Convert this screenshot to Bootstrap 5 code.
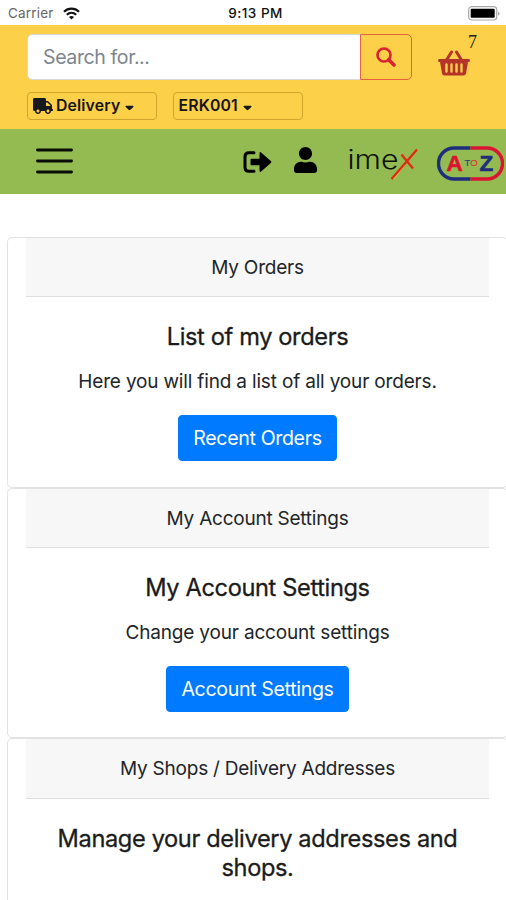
<!DOCTYPE html>
<html lang="en">
<head>
<meta charset="utf-8">
<meta name="viewport" content="width=device-width, initial-scale=1">
<title>My Account</title>
<link href="https://cdn.jsdelivr.net/npm/bootstrap@5.3.0/dist/css/bootstrap.min.css" rel="stylesheet">
<style>
html{font-size:19.556px}
body{font-family:Inter,"Liberation Sans",sans-serif;color:#212529;background:#fff;height:900px;overflow:hidden}
svg{display:block;flex:none}
.status-bar{height:25px;font-size:13.5px;padding:1px 6px 0 8px;display:grid;grid-template-columns:1fr auto 1fr}
.status-bar .carrier{color:#666;letter-spacing:.2px}
.status-bar .clock{font-weight:500;letter-spacing:.5px;color:#111;padding-left:3px}
.search-area{background:#fdd04a;height:104px;padding:9px 0 0 27px}
.search-box{width:385px;height:46px}
.search-box .form-control{border:1px solid #d8d8d8;border-radius:5px 0 0 5px;padding:2px 15px 0;letter-spacing:-.4px}
.search-box .form-control::placeholder{color:#7d858c}
.search-box .btn{width:52px;border:1px solid #e8603c;border-radius:0 5px 5px 0;padding:0}
.basket{width:44px;margin-left:26px}
.basket-count{font:18px/16px "Liberation Serif",serif;color:#222;padding-right:5px}
.picker-row{margin-top:12px;gap:16px}
.picker{width:130px;height:28px;border:1px solid #d0a52e;border-radius:4px;padding:0 4.5px;font-size:15.8px;font-weight:600;color:#151515;letter-spacing:.15px}
.picker svg:first-child{margin-right:3.5px}
.green-bar{background:#94bb52;height:65px;padding:0 2px 0 36px}
.green-bar .menu-icon{margin-bottom:2px}
.green-bar .exit-icon{margin-right:22px}
.green-bar .user-icon{margin-right:26px;margin-bottom:4px}
.green-bar .imex-logo{margin-right:16px}
.green-bar .atoz-logo{margin-top:3px}
.account-list{margin:43px -2px 0 7px;height:664px;overflow:hidden}
.account-list .card{border:1.4px solid #e2e2e2;border-radius:5px;padding:0 18px;height:250.7px}
.account-list .card-header{background:#f7f7f7;border-bottom:1.4px solid #dfdfdf;border-radius:0;padding:16px 1rem 0;height:59.3px;font-size:19px;letter-spacing:-.23px}
.account-list .card-body{padding:25px 1.25rem 0}
.account-list .card-title{font-size:23.6px;line-height:29.3px;letter-spacing:-.36px;font-weight:400;-webkit-text-stroke:.3px #1b1b1b;margin:0 -10px 15.5px;color:#1b1b1b}
.account-list .card-text{font-size:19px;line-height:29.3px;letter-spacing:-.17px;margin-bottom:18.500px}
.account-list .btn{--bs-btn-bg:#007bff;--bs-btn-border-color:#007bff;border-radius:4px;line-height:1.5;padding:8.5px 14.5px 6.5px;letter-spacing:-.33px}
.account-list .card-text,.account-list .card-header{white-space:nowrap}
</style>
</head>
<body>
<div class="status-bar align-items-center">
  <div class="d-flex align-items-center gap-2">
    <span class="carrier">Carrier</span>
    <svg width="17" height="13" viewBox="0 0 17 13" fill="none" stroke="#111" stroke-width="2.2"><path d="M1 4.7C5.2.6 11.8.6 16 4.7M3.8 7.8c2.700-2.500 6.700-2.500 9.400 0"/><path d="M8.500 12.500 6 9.900c1.500-1.200 3.500-1.200 5 0z" fill="#111" stroke="none"/></svg>
  </div>
  <span class="clock">9:13 PM</span>
  <svg class="ms-auto" width="32" height="15" viewBox="0 0 32 15"><rect x=".7" y=".7" width="28" height="13.300" rx="3" fill="#fff" stroke="#aaa" stroke-width="1.200"/><rect x="2.700" y="2.800" width="24" height="9" rx="1"/><path d="M30 5.500c2 .5 2 3.500 0 4z" fill="#aaa"/></svg>
</div>

<header class="search-area">
  <div class="d-flex">
    <div class="input-group search-box flex-nowrap">
      <input class="form-control" type="text" placeholder="Search for..." aria-label="Search">
      <button class="btn d-flex align-items-center justify-content-center" type="button" aria-label="Search">
        <svg width="20" height="20" viewBox="0 0 20 20" fill="none" stroke="#d82432"><circle cx="8" cy="8" r="6.500" stroke-width="2.700"/><path d="m12.700 12.700 5.300 5.300" stroke-width="3.600" stroke-linecap="round"/></svg>
      </button>
    </div>
    <div class="basket d-flex flex-column">
      <span class="basket-count text-end">7</span>
      <svg width="32" height="26" viewBox="0 0 32 26"><path d="m8.500 10 5-8M23.500 10l-5-8" stroke="#b5342a" stroke-width="3" stroke-linecap="round"/><path fill="#b5342a" fill-rule="evenodd" d="M1.500 9h29q1.500 0 1.500 1.500T30.500 12H30l-2 11.500q-.4 2-2.500 2h-19q-2.100 0-2.500-2L2 12h-.5Q0 12 0 10.500T1.500 9zM7.300 14.500v7a1.200 1.200 0 0 0 2.400 0v-7a1.200 1.200 0 0 0-2.400 0zm5 0v7a1.200 1.200 0 0 0 2.400 0v-7a1.200 1.200 0 0 0-2.400 0zm5 0v7a1.200 1.200 0 0 0 2.400 0v-7a1.200 1.200 0 0 0-2.400 0zm5 0v7a1.200 1.200 0 0 0 2.400 0v-7a1.200 1.200 0 0 0-2.400 0z"/></svg>
    </div>
  </div>
  <div class="d-flex picker-row">
    <div class="picker d-flex align-items-center">
      <svg width="20" height="16" viewBox="0 0 640 512" fill="#15181c"><path d="M624 352h-16V243.900c0-12.700-5.100-24.900-14.100-33.900L494 110.100c-9-9-21.200-14.100-33.900-14.100H416V48c0-26.500-21.500-48-48-48H48C21.500 0 0 21.500 0 48v320c0 26.500 21.500 48 48 48h16c0 53 43 96 96 96s96-43 96-96h128c0 53 43 96 96 96s96-43 96-96h48c8.800 0 16-7.200 16-16v-32c0-8.800-7.200-16-16-16zM160 464c-26.500 0-48-21.500-48-48s21.500-48 48-48 48 21.500 48 48-21.500 48-48 48zm320 0c-26.500 0-48-21.500-48-48s21.500-48 48-48 48 21.500 48 48-21.500 48-48 48zm80-208H416V144h44.100l99.900 99.900V256z"/></svg>
      <span>Delivery</span>
      <svg class="ms-1 mt-1" width="9" height="6" viewBox="0 0 10 6" fill="#15181c"><path d="M1.200.5h7.600q1.200.4.400 1.500L6 5q-1 .9-2 0L.8 2Q0 .9 1.200.5z"/></svg>
    </div>
    <div class="picker d-flex align-items-center">
      <span>ERK001</span>
      <svg class="ms-1 mt-1" width="9" height="6" viewBox="0 0 10 6" fill="#15181c"><path d="M1.200.5h7.600q1.200.4.400 1.500L6 5q-1 .9-2 0L.8 2Q0 .9 1.200.5z"/></svg>
    </div>
  </div>
</header>

<nav class="green-bar d-flex align-items-center">
  <svg class="menu-icon me-auto" width="37" height="26" viewBox="0 0 37 26" stroke="#0a0d06" stroke-width="2.900" stroke-linecap="round"><path d="M1.500 2h34M1.500 13h34M1.500 24h34"/></svg>
  <svg class="exit-icon" width="29" height="24" viewBox="0 0 29 24"><path d="M11 2.700H6Q2 2.700 2 6.700v10.600q0 4 4 4h5" fill="none" stroke="#000" stroke-width="3" stroke-linecap="round"/><path d="M8.500 8.800h8V3.500q0-2.300 1.900-.8l9.400 8.400q1 .9 0 1.800l-9.400 8.400q-1.900 1.500-1.900-.8v-5.300h-8q-1 0-1-1V9.800q0-1 1-1z"/></svg>
  <svg class="user-icon" width="23" height="26" viewBox="0 0 448 512" preserveAspectRatio="none"><path d="M224 256c70.700 0 128-57.300 128-128S294.700 0 224 0 96 57.300 96 128s57.300 128 128 128zm89.600 32h-16.700c-22.200 10.200-46.900 16-72.900 16s-50.600-5.800-72.900-16h-16.700C60.200 288 0 348.200 0 422.400V464c0 26.500 21.500 48 48 48h352c26.500 0 48-21.500 48-48v-41.600c0-74.200-60.200-134.400-134.400-134.400z"/></svg>
  <svg class="imex-logo" width="78" height="36" viewBox="0 0 78 36" role="img" aria-label="imex"><text x="4.500" y="24.500" font-family="Inter,sans-serif" font-weight="300" font-size="26" textLength="51" lengthAdjust="spacingAndGlyphs" fill="#0c1008">ime</text><path d="M50.500 34.500 62 20" stroke="#eec04a" stroke-width="2"/><path d="m48.500 35 25.500-29.500M58.500 10.500l11.500 14" fill="none" stroke="#df2a12" stroke-width="2.300"/></svg>
  <svg class="atoz-logo" width="67" height="35" viewBox="0 0 67 35" role="img" aria-label="A to Z"><g fill="none" stroke-width="3.400"><path d="M33.500 2H17a15.500 15.500 0 0 0 0 31h16.500" stroke="#202d7c"/><path d="M33.500 2H50a15.500 15.500 0 0 1 0 31H33.500" stroke="#d91532"/></g><g font-family="Liberation Sans,sans-serif" font-weight="700"><text x="9.500" y="25" font-size="22.500" fill="#dd1430" stroke="#dd1430" stroke-width=".6">A</text><text x="42.500" y="25" font-size="22.500" fill="#202d7c" stroke="#202d7c" stroke-width=".6">Z</text><text x="27.500" y="19.500" font-size="9.500" font-weight="400" fill="#2a4480" stroke="#2a4480" stroke-width=".2">T<tspan fill="#d83b32" stroke="#d83b32">O</tspan></text></g></svg>
</nav>

<main class="account-list text-center">
  <section class="card">
    <div class="card-header">My Orders</div>
    <div class="card-body">
      <h5 class="card-title">List of my orders</h5>
      <p class="card-text">Here you will find a list of all your orders.</p>
      <a href="#" class="btn btn-primary">Recent Orders</a>
    </div>
  </section>
  <section class="card">
    <div class="card-header">My Account Settings</div>
    <div class="card-body">
      <h5 class="card-title">My Account Settings</h5>
      <p class="card-text">Change your account settings</p>
      <a href="#" class="btn btn-primary">Account Settings</a>
    </div>
  </section>
  <section class="card">
    <div class="card-header">My Shops / Delivery Addresses</div>
    <div class="card-body">
      <h5 class="card-title">Manage your delivery addresses and shops.</h5>
    </div>
  </section>
</main>
<script src="https://cdn.jsdelivr.net/npm/bootstrap@5.3.0/dist/js/bootstrap.bundle.min.js"></script>
</body>
</html>
